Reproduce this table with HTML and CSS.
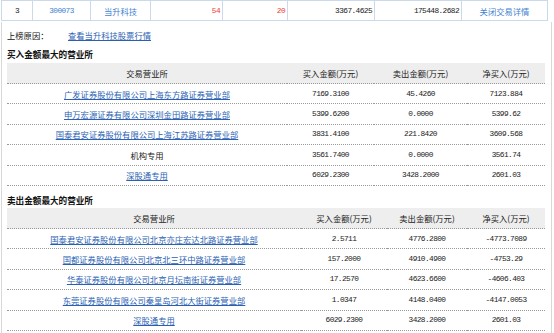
FILE: index.html
```html
<!DOCTYPE html>
<html lang="zh-CN">
<head>
<meta charset="utf-8">
<title>交易详情</title>
<link rel="stylesheet" href="styles.css">
</head>
<body>
<table class="top">
  <colgroup>
    <col class="c1"><col class="c2"><col class="c3"><col class="c4"><col class="c5"><col class="c6"><col class="c7"><col class="c8">
  </colgroup>
  <tr>
    <td class="ctr num">3</td>
    <td class="ctr blue num">300073</td>
    <td class="ctr blue">当升科技</td>
    <td class="rt red num">54</td>
    <td class="rt red num">20</td>
    <td class="rt num">3367.4625</td>
    <td class="rt num">175448.2682</td>
    <td class="ctr blue">关闭交易详情</td>
  </tr>
</table>
<div class="detail">
  <div class="reason"><span class="label">上榜原因：</span><a href="#" class="link">查看当升科技股票行情</a></div>
  <div class="title">买入金额最大的营业所</div>
  <table class="deals buy">
    <colgroup><col class="d1"><col class="d2"><col class="d3"><col class="d4"></colgroup>
    <tr class="head"><th>交易营业所</th><th>买入金额(万元)</th><th>卖出金额(万元)</th><th>净买入(万元)</th></tr>
    <tr><td><a href="#" class="link">广发证券股份有限公司上海东方路证券营业部</a></td><td class="num">7169.3100</td><td class="num">45.4260</td><td class="num">7123.884</td></tr>
    <tr><td><a href="#" class="link">申万宏源证券有限公司深圳金田路证券营业部</a></td><td class="num">5399.6200</td><td class="num">0.0000</td><td class="num">5399.62</td></tr>
    <tr><td><a href="#" class="link">国泰君安证券股份有限公司上海江苏路证券营业部</a></td><td class="num">3831.4100</td><td class="num">221.8420</td><td class="num">3609.568</td></tr>
    <tr><td>机构专用</td><td class="num">3561.7400</td><td class="num">0.0000</td><td class="num">3561.74</td></tr>
    <tr><td><a href="#" class="link">深股通专用</a></td><td class="num">6029.2300</td><td class="num">3428.2000</td><td class="num">2601.03</td></tr>
  </table>
  <div class="title second">卖出金额最大的营业所</div>
  <table class="deals sell">
    <colgroup><col class="e1"><col class="e2"><col class="e3"><col class="e4"></colgroup>
    <tr class="head"><th>交易营业所</th><th>买入金额(万元)</th><th>卖出金额(万元)</th><th>净买入(万元)</th></tr>
    <tr><td><a href="#" class="link">国泰君安证券股份有限公司北京亦庄宏达北路证券营业部</a></td><td class="num">2.5711</td><td class="num">4776.2800</td><td class="num">-4773.7089</td></tr>
    <tr><td><a href="#" class="link">国都证券股份有限公司北京北三环中路证券营业部</a></td><td class="num">157.2000</td><td class="num">4910.4900</td><td class="num">-4753.29</td></tr>
    <tr><td><a href="#" class="link">华泰证券股份有限公司北京月坛南街证券营业部</a></td><td class="num">17.2570</td><td class="num">4623.6600</td><td class="num">-4606.403</td></tr>
    <tr><td><a href="#" class="link">东莞证券股份有限公司秦皇岛河北大街证券营业部</a></td><td class="num">1.0347</td><td class="num">4148.0400</td><td class="num">-4147.0053</td></tr>
    <tr><td><a href="#" class="link">深股通专用</a></td><td class="num">6029.2300</td><td class="num">3428.2000</td><td class="num">2601.03</td></tr>
  </table>
</div>
</body>
</html>
```

FILE: styles.css
```css
html, body {
  margin: 0;
  padding: 0;
  background: #ffffff;
}
body {
  width: 554px;
  height: 333px;
  overflow: hidden;
  font-family: "Noto Sans CJK SC", "Liberation Sans", sans-serif;
  font-size: 8.3px;
  color: #222222;
}
.num {
  font-family: "Liberation Mono", "DejaVu Sans Mono", monospace;
  font-size: 7.8px;
  letter-spacing: -0.58px;
}
.link {
  color: #2b5fb4;
  text-decoration: underline;
}

/* top summary row */
.top {
  margin-left: 1px;
  width: 547px;
  table-layout: fixed;
  border-collapse: collapse;
}
.top td {
  height: 19px;
  padding: 0 2px;
  border: 1px solid #cbdaea;
  white-space: nowrap;
  overflow: hidden;
}
.top .c1 { width: 31px; }
.top .c2 { width: 58px; }
.top .c3 { width: 60px; }
.top .c4 { width: 72px; }
.top .c5 { width: 65px; }
.top .c6 { width: 87px; }
.top .c7 { width: 87px; }
.top .c8 { width: 86px; }
.ctr { text-align: center; }
.rt { text-align: right; }
.blue { color: #3f7fd0; }
.red { color: #f03a3a; }

/* detail panel */
.detail {
  margin: 1px 0 0 1px;
  width: 544px;
  height: 320px;
  border-left: 1px solid #d8d8d8;
  border-right: 1px solid #d8d8d8;
  padding: 6px 1px 0 4px;
}
.reason {
  height: 14px;
  line-height: 14px;
  display: flex;
  align-items: center;
  padding-left: 1px;
}
.reason .label {
  width: 61px;
  color: #111111;
}
.title {
  margin-top: 5px;
  height: 14px;
  line-height: 14px;
  font-weight: bold;
  font-size: 8.6px;
  color: #111111;
  padding-left: 1px;
}
.title.second {
  margin-top: 7px;
}
.deals {
  margin: 2px 0 0 1px;
  width: 538px;
  table-layout: fixed;
  border-collapse: separate;
  border-spacing: 0;
}
.deals.sell { margin-top: 1px; }
.deals th {
  height: 20px;
  padding: 0;
  background: #eeeeee;
  font-weight: normal;
  color: #222222;
  border-bottom: 1px dotted #9a9a9a;
  white-space: nowrap;
}
.deals td {
  height: 19.4px;
  padding: 0;
  text-align: center;
  border-bottom: 1px dotted #9a9a9a;
  white-space: nowrap;
}
.buy .d1 { width: 280px; }
.buy .d2 { width: 87px; }
.buy .d3 { width: 93px; }
.buy .d4 { width: 78px; }
.sell .e1 { width: 294px; }
.sell .e2 { width: 86px; }
.sell .e3 { width: 80px; }
.sell .e4 { width: 78px; }
```
